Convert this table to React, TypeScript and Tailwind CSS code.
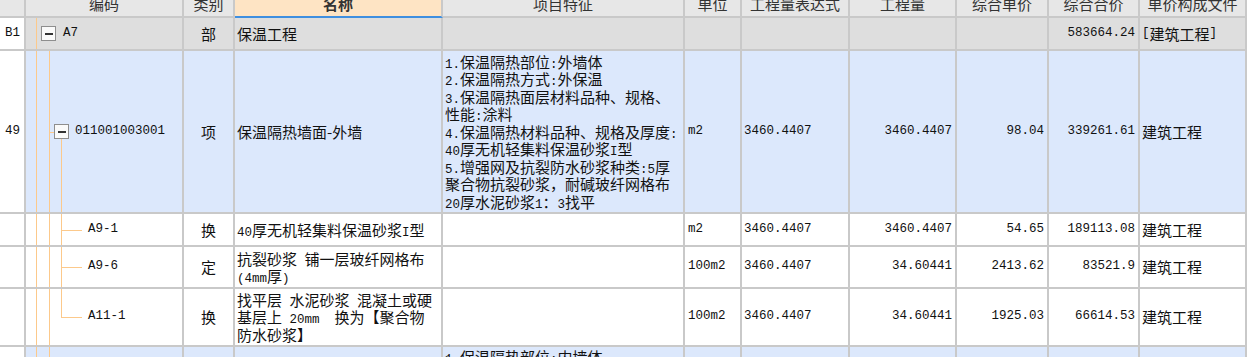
import React from 'react';

const GRID =
  'grid grid-cols-[26px_158px_51px_208px_242px_57px_108px_107px_92px_91px_107px]';
const MONO = "font-['Liberation_Mono',monospace] text-[12.5px]";

function Txt({ text }: { text: string }) {
  const parts = text.split(/([\x20-\x7e]+)/);
  return (
    <>
      {parts.map((p, i) =>
        /^[\x20-\x7e]+$/.test(p) ? (
          <span key={i} className={`${MONO} leading-none`}>
            {p}
          </span>
        ) : (
          <React.Fragment key={i}>{p}</React.Fragment>
        )
      )}
    </>
  );
}

function Lines({ lines }: { lines: string[] }) {
  return (
    <div className="leading-[17.5px]">
      {lines.map((l, i) => (
        <div key={i} className="h-[17.5px] whitespace-pre">
          <Txt text={l} />
        </div>
      ))}
    </div>
  );
}

function Cell({ children, className = '' }: { children?: React.ReactNode; className?: string }) {
  return (
    <div
      className={`flex items-center overflow-hidden border-b-2 border-r-2 border-[#c9c9c9] leading-[17.5px] ${className}`}
    >
      {children}
    </div>
  );
}

function VLine({ left }: { left: string }) {
  return <span className={`absolute top-0 -bottom-[2px] w-px bg-[#fcc98b] ${left}`} />;
}

function Toggle() {
  return (
    <span className="flex h-[15px] w-[15px] shrink-0 items-center justify-center border border-[#8e8e8e] bg-[#fafafa]">
      <span className="h-[2px] w-[8px] bg-[#333]" />
    </span>
  );
}

const headers = ['', '编码', '类别', '名称', '项目特征', '单位', '工程量表达式', '工程量', '综合单价', '综合合价', '单价构成文件'];

const features = [
  '1.保温隔热部位:外墙体',
  '2.保温隔热方式:外保温',
  '3.保温隔热面层材料品种、规格、',
  '性能:涂料',
  '4.保温隔热材料品种、规格及厚度:',
  '40厚无机轻集料保温砂浆I型',
  '5.增强网及抗裂防水砂浆种类:5厚',
  '聚合物抗裂砂浆，耐碱玻纤网格布',
  '20厚水泥砂浆1：3找平',
];

type Sub = {
  code: string;
  kind: string;
  name: string[];
  unit: string;
  qty: string;
  price: string;
  total: string;
  height: string;
  last?: boolean;
};

const subs: Sub[] = [
  { code: 'A9-1', kind: '换', name: ['40厚无机轻集料保温砂浆I型'], unit: 'm2', qty: '3460.4407', price: '54.65', total: '189113.08', height: 'h-[33px]' },
  { code: 'A9-6', kind: '定', name: ['抗裂砂浆 铺一层玻纤网格布', '(4mm厚)'], unit: '100m2', qty: '34.60441', price: '2413.62', total: '83521.9', height: 'h-[42px]' },
  { code: 'A11-1', kind: '换', name: ['找平层 水泥砂浆 混凝土或硬', '基层上 20mm  换为【聚合物', '防水砂浆】'], unit: '100m2', qty: '34.60441', price: '1925.03', total: '66614.53', height: 'h-[58px]', last: true },
];

export default function App() {
  return (
    <div className="h-[357px] w-[1247px] overflow-hidden bg-white font-['Noto_Sans_CJK_SC',sans-serif] text-[15px] text-[#111]">
      {/* header, scrolled so only the lower part of the labels shows */}
      <div className={`${GRID} h-[18px] bg-[#e7e7e7] text-[#333]`}>
        {headers.map((h, i) => (
          <div
            key={i}
            className={`flex items-start justify-center overflow-hidden border-r-2 border-b-2 ${
              i === 3 ? 'border-r-[#c9c9c9] border-b-[#3f8fe0] bg-[#fee4c4] font-bold' : 'border-[#c9c9c9]'
            }`}
          >
            <span className="-mt-[4px] whitespace-nowrap leading-[15px]">{h}</span>
          </div>
        ))}
      </div>

      {/* B1 */}
      <div className={`${GRID} h-[33px] bg-[#dedede]`}>
        <Cell className={`bg-white pl-[5px] ${MONO}`}>B1</Cell>
        <Cell className="relative pl-[15px]">
          <VLine left="left-[10px]" />
          <Toggle />
          <span className={`ml-[7px] ${MONO}`}>A7</span>
        </Cell>
        <Cell className="justify-center">部</Cell>
        <Cell className="pl-[2px]">保温工程</Cell>
        <Cell />
        <Cell />
        <Cell />
        <Cell />
        <Cell />
        <Cell className={`justify-end pr-[3px] ${MONO}`}>583664.24</Cell>
        <Cell className="pl-[2px]">
          <Txt text="[建筑工程]" />
        </Cell>
      </div>

      {/* 49 */}
      <div className={`${GRID} h-[163px] bg-[#dce8fc]`}>
        <Cell className={`bg-white pl-[5px] ${MONO}`}>49</Cell>
        <Cell className="relative pl-[28px]">
          <VLine left="left-[10px]" />
          <VLine left="left-[23px]" />
          <span className="absolute left-[23px] top-1/2 h-px w-[5px] bg-[#fcc98b]" />
          <span className="absolute left-[35px] top-[calc(50%+7px)] -bottom-[2px] w-px bg-[#fcc98b]" />
          <Toggle />
          <span className={`ml-[6px] ${MONO}`}>011001003001</span>
        </Cell>
        <Cell className="justify-center">项</Cell>
        <Cell className="pl-[2px]">保温隔热墙面-外墙</Cell>
        <Cell className="pl-[2px]">
          <Lines lines={features} />
        </Cell>
        <Cell className={`pl-[3px] ${MONO}`}>m2</Cell>
        <Cell className={`pl-[2px] ${MONO}`}>3460.4407</Cell>
        <Cell className={`justify-end pr-[3px] ${MONO}`}>3460.4407</Cell>
        <Cell className={`justify-end pr-[3px] ${MONO}`}>98.04</Cell>
        <Cell className={`justify-end pr-[3px] ${MONO}`}>339261.61</Cell>
        <Cell className="pl-[2px]">建筑工程</Cell>
      </div>

      {subs.map((s) => (
        <div key={s.code} className={`${GRID} ${s.height} bg-white`}>
          <Cell />
          <Cell className="relative pl-[62px]">
            <VLine left="left-[10px]" />
            <VLine left="left-[23px]" />
            {s.last ? (
              <span className="absolute left-[35px] top-0 h-1/2 w-px bg-[#fcc98b]" />
            ) : (
              <VLine left="left-[35px]" />
            )}
            <span className="absolute left-[35px] top-1/2 h-px w-[21px] bg-[#fcc98b]" />
            <span className={MONO}>{s.code}</span>
          </Cell>
          <Cell className="justify-center">{s.kind}</Cell>
          <Cell className="pl-[2px]">
            <Lines lines={s.name} />
          </Cell>
          <Cell />
          <Cell className={`pl-[3px] ${MONO}`}>{s.unit}</Cell>
          <Cell className={`pl-[2px] ${MONO}`}>3460.4407</Cell>
          <Cell className={`justify-end pr-[3px] ${MONO}`}>{s.qty}</Cell>
          <Cell className={`justify-end pr-[3px] ${MONO}`}>{s.price}</Cell>
          <Cell className={`justify-end pr-[3px] ${MONO}`}>{s.total}</Cell>
          <Cell className="pl-[2px]">建筑工程</Cell>
        </div>
      ))}

      {/* next item, cut off by the viewport */}
      <div className={`${GRID} h-[60px] bg-[#dce8fc]`}>
        <Cell className="bg-white" />
        <Cell className="relative">
          <VLine left="left-[10px]" />
          <VLine left="left-[23px]" />
        </Cell>
        <Cell />
        <Cell />
        <Cell className="items-start pl-[2px] pt-[1px]">
          <Lines lines={['1.保温隔热部位:内墙体']} />
        </Cell>
        <Cell />
        <Cell />
        <Cell />
        <Cell />
        <Cell />
        <Cell />
      </div>
    </div>
  );
}
